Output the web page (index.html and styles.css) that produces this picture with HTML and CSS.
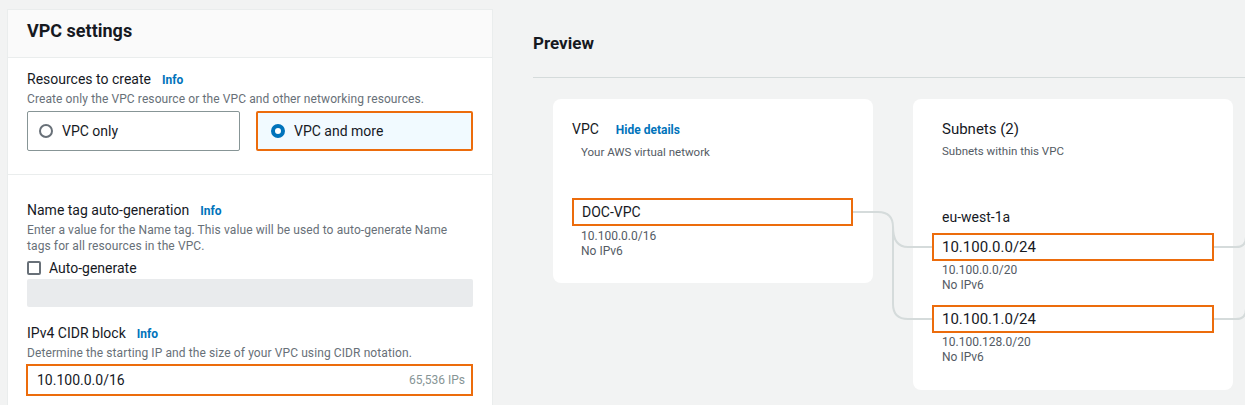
FILE: index.html
```html
<!DOCTYPE html>
<html lang="en">
<head>
<meta charset="utf-8">
<title>VPC settings</title>
<link rel="stylesheet" href="styles.css">
</head>
<body>
<div class="page">
  <section class="settings">
    <header class="settings-head"><h2 class="settings-title">VPC settings</h2></header>
    <div class="block block-resources">
      <div class="label-row"><span class="label">Resources to create</span><a class="info">Info</a></div>
      <p class="desc">Create only the VPC resource or the VPC and other networking resources.</p>
      <div class="tiles">
        <div class="tile"><span class="radio"></span><span class="tile-text">VPC only</span></div>
        <div class="tile tile-selected"><span class="radio radio-on"></span><span class="tile-text">VPC and more</span></div>
      </div>
    </div>
    <div class="block block-name">
      <div class="label-row"><span class="label">Name tag auto-generation</span><a class="info">Info</a></div>
      <p class="desc">Enter a value for the Name tag. This value will be used to auto-generate Name tags for all resources in the VPC.</p>
      <div class="check-row"><span class="checkbox"></span><span class="check-text">Auto-generate</span></div>
      <div class="disabled-input"></div>
      <div class="label-row label-cidr"><span class="label">IPv4 CIDR block</span><a class="info">Info</a></div>
      <p class="desc">Determine the starting IP and the size of your VPC using CIDR notation.</p>
      <div class="cidr-input"><span class="cidr-value">10.100.0.0/16</span><span class="cidr-count">65,536 IPs</span></div>
    </div>
  </section>
  <section class="preview">
    <h2 class="preview-title">Preview</h2>
    <div class="diagram">
      <svg class="links" width="713" height="327" viewBox="0 0 713 327" fill="none" stroke="#d5dbdb" stroke-width="2">
        <path d="M320 134 H345 Q360 134 360 149 V226 Q360 241 375 241 H400"/>
        <path d="M360 149 Q360 169 375 169 H400"/>
        <path d="M680 169 H703 Q713 169 713 159"/>
        <path d="M680 241 H703 Q713 241 713 231"/>
      </svg>
      <div class="card card-vpc">
        <div class="card-head"><span class="card-title">VPC</span><a class="info info-hide">Hide details</a></div>
        <p class="card-sub card-sub-indent">Your AWS virtual network</p>
        <div class="node node-vpc">DOC-VPC</div>
        <p class="node-meta">10.100.0.0/16</p>
        <p class="node-meta">No IPv6</p>
      </div>
      <div class="card card-subnets">
        <div class="card-head pad"><span class="card-title card-title-lg">Subnets (2)</span></div>
        <p class="card-sub pad">Subnets within this VPC</p>
        <p class="az pad">eu-west-1a</p>
        <div class="node node-subnet">10.100.0.0/24</div>
        <p class="node-meta pad">10.100.0.0/20</p>
        <p class="node-meta pad">No IPv6</p>
        <div class="node node-subnet node-second">10.100.1.0/24</div>
        <p class="node-meta pad">10.100.128.0/20</p>
        <p class="node-meta pad">No IPv6</p>
      </div>
    </div>
  </section>
</div>
</body>
</html>
```

FILE: styles.css
```css
* { box-sizing: border-box; }
html, body { margin: 0; padding: 0; }
body {
  background: #f2f3f3;
  font-family: Roboto, "Liberation Sans", Arial, sans-serif;
  color: #16191f;
  width: 1245px;
  height: 405px;
  overflow: hidden;
}
p { margin: 0; }
h2 { margin: 0; }

.page {
  display: flex;
  align-items: flex-start;
}

/* ---------- left settings panel ---------- */
.settings {
  margin: 9px 0 0 7px;
  width: 486px;
  height: 396px;
  background: #ffffff;
  border: 1px solid #eaeded;
  border-bottom: none;
}
.settings-head {
  height: 48px;
  padding: 9px 19px 0;
  background: #fafafa;
  border-bottom: 1px solid #eaeded;
}
.settings-title {
  font-size: 18px;
  line-height: 24px;
  font-weight: 700;
}
.block { padding: 11px 19px 0; }
.block-resources {
  padding-bottom: 23px;
  border-bottom: 1px solid #eaeded;
}
.block-name { padding-top: 25px; }

.label-row {
  display: flex;
  align-items: baseline;
  gap: 11px;
  font-size: 14px;
  line-height: 20px;
}
.label-cidr { margin-top: 16px; }
.info {
  color: #0073bb;
  font-weight: 700;
  font-size: 12px;
}
.desc {
  margin-top: 1px;
  font-size: 12px;
  line-height: 16px;
  letter-spacing: 0.1px;
  color: #687078;
}
.tiles {
  display: flex;
  gap: 16px;
  margin-top: 4px;
}
.tile {
  flex: 1;
  height: 40px;
  display: flex;
  align-items: center;
  gap: 9px;
  padding-left: 11px;
  border: 1px solid #879596;
  border-radius: 2px;
  font-size: 14px;
}
.tile-selected {
  background: #f1faff;
  border: 2px solid #ec6c0c;
  padding-left: 13px;
}
.radio {
  width: 14px;
  height: 14px;
  border-radius: 50%;
  border: 2px solid #687078;
  background: #fff;
}
.radio-on {
  border: 4px solid #0073bb;
}

.check-row {
  display: flex;
  align-items: center;
  gap: 8px;
  margin-top: 4px;
  height: 20px;
  font-size: 14px;
}
.checkbox {
  width: 14px;
  height: 14px;
  border: 2px solid #687078;
  border-radius: 2px;
}
.disabled-input {
  margin-top: 1px;
  height: 28px;
  background: #e9ebed;
  border-radius: 2px;
}
.cidr-input {
  margin-top: 3px;
  margin-left: -1px;
  height: 32px;
  border: 2px solid #ec6c0c;
  display: flex;
  align-items: center;
  justify-content: space-between;
  padding: 0 6px 0 9px;
}
.cidr-value { font-size: 14px; }
.cidr-count { font-size: 12px; color: #879596; }

/* ---------- preview ---------- */
.preview {
  flex: 1;
  padding-left: 40px;
}
.preview-title {
  height: 78px;
  padding-top: 33px;
  font-size: 17px;
  line-height: 20px;
  font-weight: 700;
  border-bottom: 1px solid #d5dbdb;
}
.diagram {
  position: relative;
  display: flex;
  align-items: flex-start;
  gap: 40px;
  padding: 21px 0 0 20px;
}
.links {
  position: absolute;
  left: 0;
  top: 0;
  z-index: 1;
  pointer-events: none;
}
.card {
  width: 320px;
  background: #ffffff;
  border-radius: 8px;
}
.card-vpc { padding: 20px 20px 24px 19px; }
.card-subnets { padding: 20px 20px 25px 19px; }
.pad { padding-left: 10px; }
.card-head {
  display: flex;
  align-items: baseline;
  gap: 17px;
  line-height: 20px;
}
.card-title { font-size: 14px; }
.card-title-lg { font-size: 15px; }
.card-sub {
  margin-top: 4px;
  font-size: 11.5px;
  line-height: 16px;
  color: #545b64;
}
.card-sub-indent { padding-left: 9px; }
.az {
  margin-top: 48px;
  font-size: 14px;
  line-height: 20px;
}
.node {
  height: 28px;
  border: 2px solid #ec6c0c;
  padding-left: 8px;
  display: flex;
  align-items: center;
  font-size: 14px;
  background: #fff;
  position: relative;
  z-index: 2;
}
.node-vpc {
  margin-top: 38px;
  width: 281px;
}
.node-subnet {
  margin-top: 6px;
  width: 282px;
  font-size: 15px;
}
.node-second { margin-top: 12px; }
.node-meta {
  font-size: 12px;
  line-height: 15px;
  color: #545b64;
  padding-left: 9px;
}
.node-vpc + .node-meta { margin-top: 3px; }
.node-subnet + .node-meta { margin-top: 2px; }
.card-subnets .node-meta { padding-left: 10px; }
```
